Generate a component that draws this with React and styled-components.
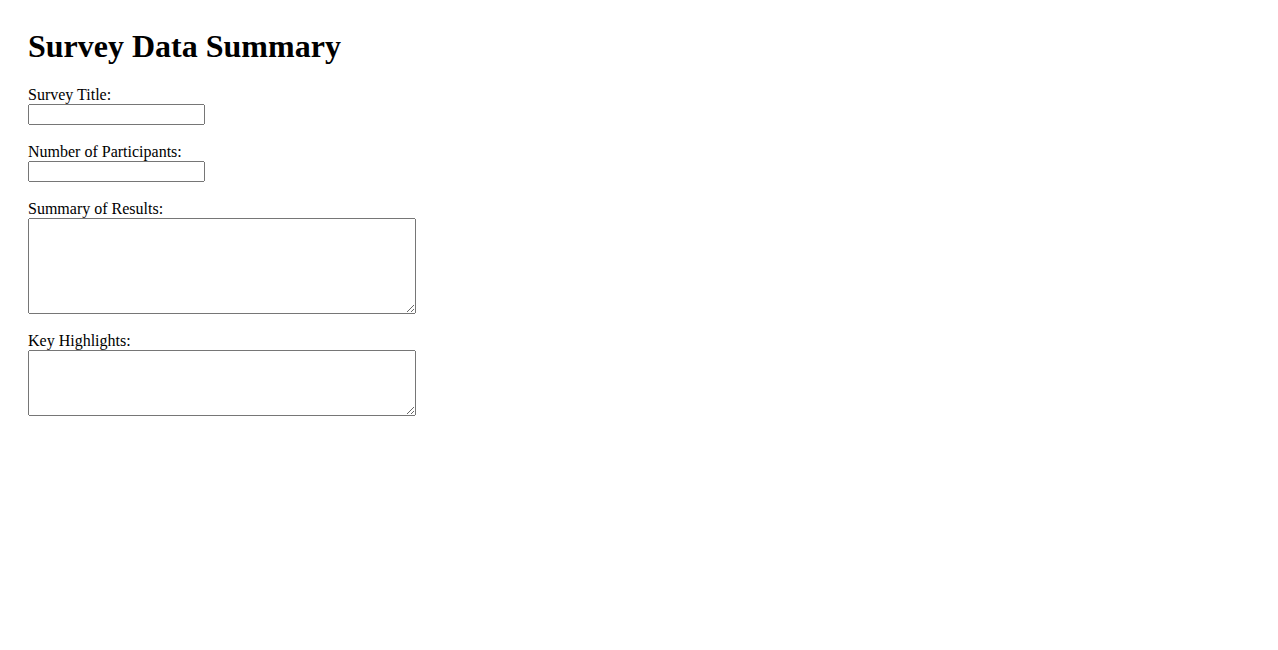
import React from "react";
import styled, { createGlobalStyle } from "styled-components";

const GlobalStyle = createGlobalStyle`
  body {
    margin: 8px;
    background: #ffffff;
    color: #000000;
    font-family: "Liberation Serif", "Times New Roman", serif;
    font-size: 16px;
  }
`;

const Page = styled.div`
  padding: 20px;
`;

const Title = styled.h1`
  margin: 0 0 21.44px 0;
  font-size: 32px;
  font-weight: bold;
  line-height: normal;
`;

const Field = styled.div`
  margin-bottom: 18px;
`;

const Label = styled.label`
  display: block;
  line-height: normal;
`;

const TextInput = styled.input`
  display: block;
  margin: 0;
  box-sizing: border-box;
  width: 177px;
  height: 21px;
`;

const TextArea = styled.textarea`
  display: block;
  margin: 0;
  box-sizing: border-box;
  width: 388px;
  height: ${(p) => p.$h}px;
`;

export default function App() {
  return (
    <>
      <GlobalStyle />
      <Page>
        <Title>Survey Data Summary</Title>
        <Field>
          <Label htmlFor="title">Survey Title:</Label>
          <TextInput id="title" type="text" />
        </Field>
        <Field>
          <Label htmlFor="participants">Number of Participants:</Label>
          <TextInput id="participants" type="number" />
        </Field>
        <Field>
          <Label htmlFor="summary">Summary of Results:</Label>
          <TextArea id="summary" $h={96} />
        </Field>
        <Field>
          <Label htmlFor="highlights">Key Highlights:</Label>
          <TextArea id="highlights" $h={66} />
        </Field>
      </Page>
    </>
  );
}
